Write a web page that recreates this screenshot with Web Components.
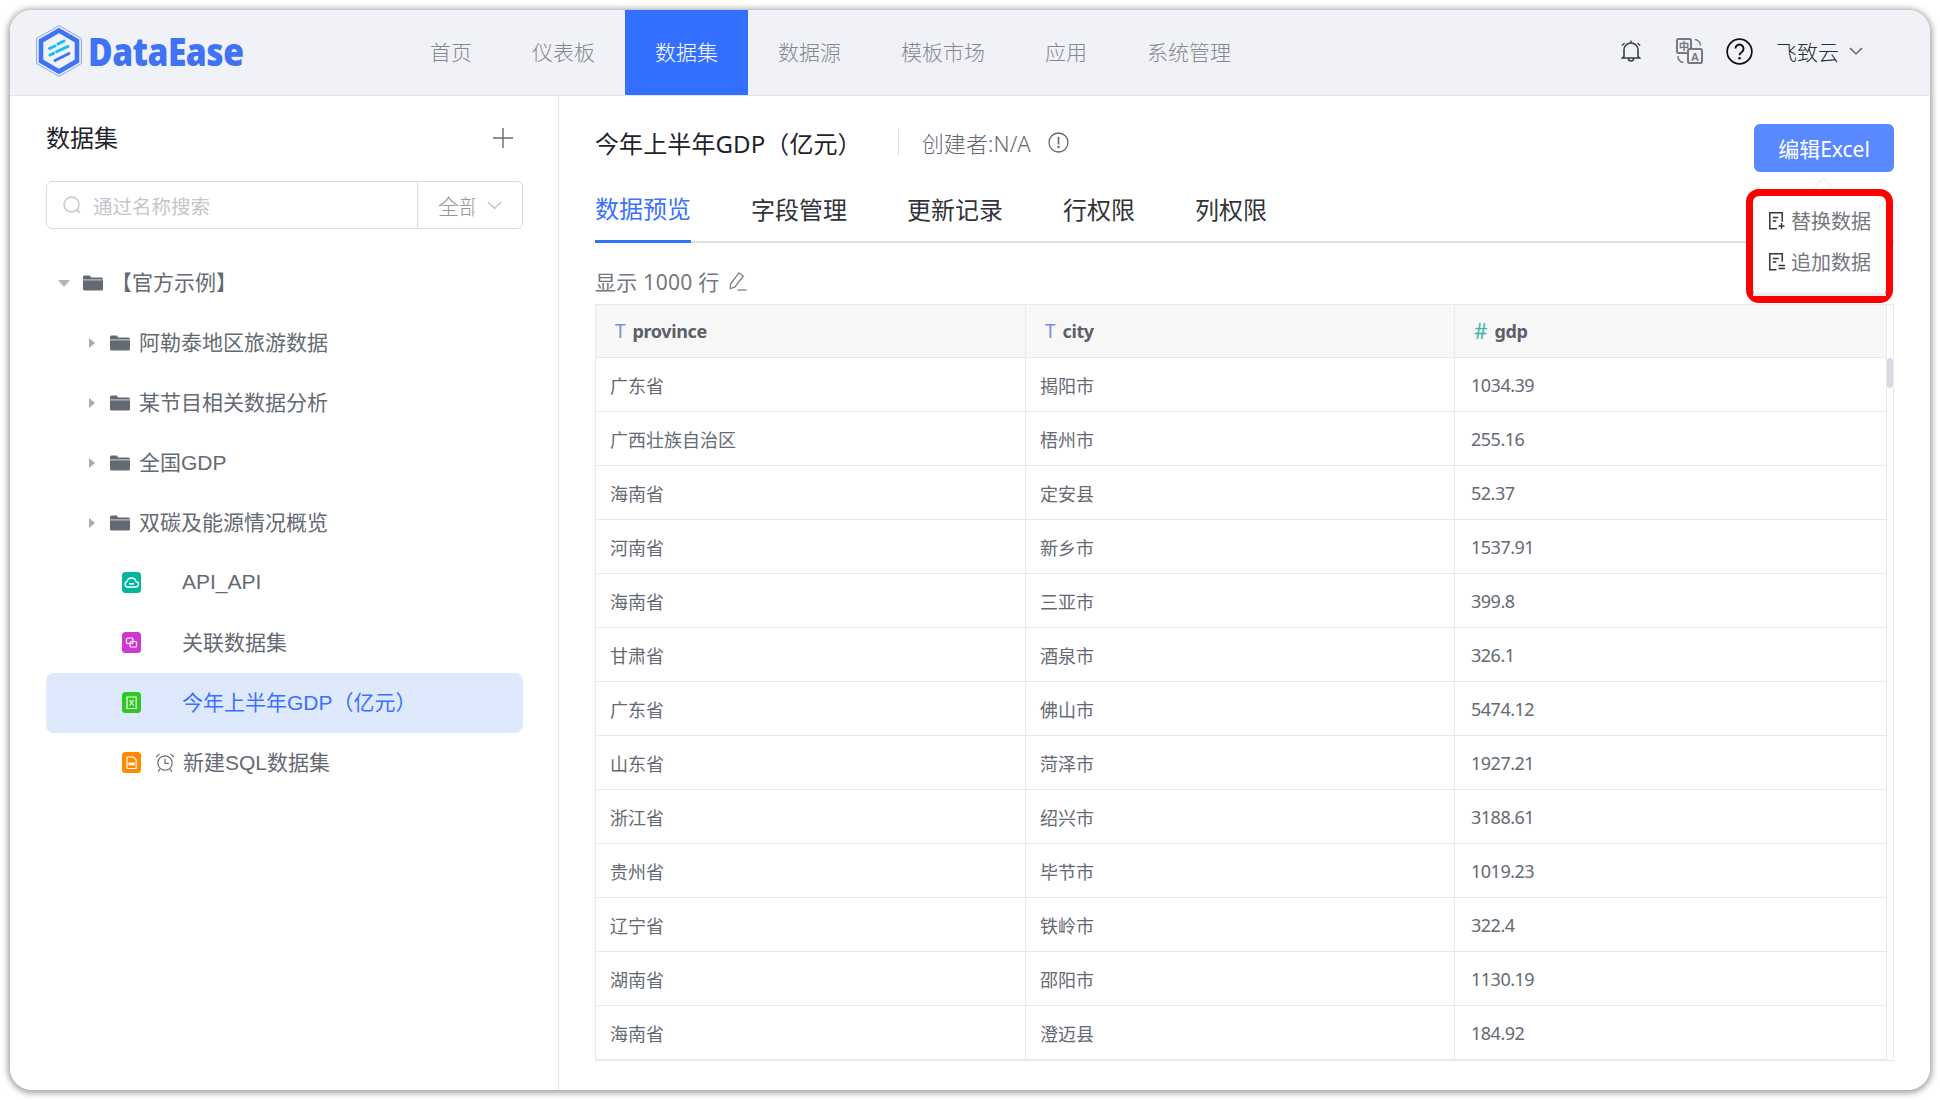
<!DOCTYPE html>
<html lang="zh">
<head>
<meta charset="UTF-8">
<title>DataEase</title>
<style>
  html, body { margin: 0; padding: 0; background: #fff; }
  body { width: 1940px; height: 1100px; overflow: hidden; font-family: "Noto Sans", "Noto Sans CJK SC", sans-serif; }
</style>
</head>
<body>
<de-app>
  <de-header slot="header"></de-header>
  <de-sidebar slot="side"></de-sidebar>
  <de-main slot="main"></de-main>
</de-app>
<script>
const CJK = '"Noto Sans CJK SC", sans-serif'
const icons = {
  folder: '<svg width="20" height="16" viewBox="0 0 20 16"><path d="M0 2a1.5 1.5 0 0 1 1.5-1.5h5.2l1.6 2h10.2A1.5 1.5 0 0 1 20 4v10a1.5 1.5 0 0 1-1.5 1.5h-17A1.5 1.5 0 0 1 0 14z" fill="#646a73"/><rect x="0" y="4.4" width="20" height="1" fill="#fff" opacity=".7"/></svg>',
  api: '<svg width="19" height="21" viewBox="0 0 19 21"><rect width="19" height="21" rx="3.5" fill="#04b49c"/><path d="M5.6 15a2.7 2.7 0 0 1-.6-5.3 4.6 4.6 0 0 1 9-.1 2.7 2.7 0 0 1-.5 5.4z" fill="none" stroke="#fff" stroke-width="1.3"/><rect x="7" y="11" width="5" height="1.6" fill="#fff"/></svg>',
  union: '<svg width="19" height="21" viewBox="0 0 19 21"><rect width="19" height="21" rx="3.5" fill="#d036d0"/><rect x="4.5" y="6" width="6.5" height="5.5" rx="1" fill="none" stroke="#fff" stroke-width="1.2"/><rect x="8" y="9.5" width="6.5" height="5.5" rx="1" fill="none" stroke="#fff" stroke-width="1.2"/></svg>',
  excel: '<svg width="19" height="21" viewBox="0 0 19 21"><rect width="19" height="21" rx="3.5" fill="#2cc91e"/><path d="M5 5h9.2v11.5H5z" fill="none" stroke="#fff" stroke-width="1.2"/><path d="M7.6 8l4 5.5M11.6 8l-4 5.5" stroke="#fff" stroke-width="1.1"/></svg>',
  sql: '<svg width="19" height="21" viewBox="0 0 19 21"><rect width="19" height="21" rx="3.5" fill="#ff8a00"/><path d="M5 5h6.5L14.2 8v8.5H5z" fill="none" stroke="#fff" stroke-width="1.2"/><rect x="6.5" y="10.5" width="6.2" height="2.8" fill="#fff"/></svg>',
  clock: '<svg width="20" height="21" viewBox="0 0 20 21" fill="none" stroke="#646a73" stroke-width="1.2"><circle cx="10" cy="11" r="7.2"/><path d="M10 6.8V11.4h3.8"/><path d="M1 5.2 4.4 1.8M19 5.2 15.6 1.8M4.8 17.2l-1.6 2.4M15.2 17.2l1.6 2.4"/></svg>'
}

class DeApp extends HTMLElement {
  constructor() {
    super()
    this.attachShadow({mode: 'open'}).innerHTML = `
      <style>
        :host { display: block; padding: 10px; }
        .win { width: 1920px; height: 1080px; box-sizing: border-box; border-radius: 22px; overflow: hidden; background: #fff;
               display: flex; flex-direction: column; }
        .frame { width: 1920px; height: 1080px; border-radius: 22px; box-shadow: 0 1px 6px 2px rgba(0,0,0,.38); }
        .body { flex: 1; display: flex; min-height: 0; }
      </style>
      <div class="frame"><div class="win">
        <slot name="header"></slot>
        <div class="body"><slot name="side"></slot><slot name="main"></slot></div>
      </div></div>`
  }
}

class DeHeader extends HTMLElement {
  constructor() {
    super()
    const items = ['首页', '仪表板', '数据集', '数据源', '模板市场', '应用', '系统管理']
    this.attachShadow({mode: 'open'}).innerHTML = `
      <style>
        :host { display: flex; height: 86px; box-sizing: border-box; background: #f0f2f7; border-bottom: 1px solid #e3e5ea;
                font-family: "Noto Sans CJK SC", sans-serif; align-items: stretch; padding-left: 26px; }
        .logo { display: flex; align-items: center; width: 364px; gap: 6px; padding-bottom: 3px; box-sizing: border-box; }
        .logo span { font: 800 38px/1 "Open Sans", sans-serif; color: #3f72f6; letter-spacing: -.6px; transform: scaleX(.885); transform-origin: left center; }
        nav { display: flex; }
        a { padding: 0 30px 4px; display: flex; align-items: center; font-size: 21px; color: #85888e; font-weight: 300; }
        a.on { background: #3370ff; color: #fff; }
        .right { margin-left: auto; display: flex; align-items: center; padding: 0 67px 3px 0; color: #1f2329; font-size: 21px; }
        .right svg { display: block; flex: none; }
        .user { font-weight: 300; color: #2a2e35; margin-left: 23px; }
      </style>
      <div class="logo">
        <svg width="46" height="52" viewBox="0 0 46 52">
          <path d="M23 .6 45.400 13.500v25L23 51.400 .6 38.500v-25z" fill="none" stroke="#86a5f8" stroke-width="1"/>
          <path d="M23 5.500 41 15.900v20.200L23 46.500 5 36.100V15.900z" fill="#f0f2f7" stroke="#3f72f6" stroke-width="4.600"/>
          <path d="M13.500 23.500 19 21M22 19 28 16M14 30 17.500 28.300M20.700 26.700 32 21.500" stroke="#17bdf8" stroke-width="3" stroke-linecap="round" fill="none"/>
          <path d="M19 35.500 33 28.500" stroke="#3f72f6" stroke-width="2.800" stroke-linecap="round" fill="none"/>
        </svg>
        <span>DataEase</span>
      </div>
      <nav>${items.map(t => `<a class="${t === '数据集' ? 'on' : ''}">${t}</a>`).join('')}</nav>
      <div class="right">
        <svg width="20" height="22" viewBox="0 0 20 22" fill="none" stroke="#3a3d42" stroke-width="1.600"><path d="M3 16.500V10a7 7 0 0 1 14 0v6.500l1.500 1.500h-17zM7.500 18.500a2.500 2.500 0 0 0 5 0"/><path d="M10 .5V3M.8 5.500l2.800-2.300M19.200 5.500l-2.800-2.300" stroke-width="1.300"/></svg>
        <svg style="margin-left:35px" width="27" height="26" viewBox="0 0 27 26" fill="none" stroke="#76797e" stroke-width="2"><rect x="1" y="1" width="14" height="14" rx="1.500"/><rect x="12" y="11" width="14" height="14" rx="1.500" fill="#f0f2f7"/><text x="8" y="12" text-anchor="middle" font-family="Noto Sans CJK SC" font-size="10.500" font-weight="700" fill="#76797e" stroke="none">中</text><text x="19" y="22.500" text-anchor="middle" font-family="Liberation Sans" font-size="11" font-weight="700" fill="#76797e" stroke="none">A</text><path d="M19 1.500a6 6 0 0 1 5.500 6M2 18a6 6 0 0 0 5.500 6.500" stroke-width="1.500"/></svg>
        <svg style="margin-left:23px" width="27" height="27" viewBox="0 0 28 28" fill="none"><circle cx="14" cy="14" r="12.800" stroke="#111" stroke-width="1.800"/><path d="M9.800 11a4.200 4.200 0 1 1 6.600 3.500c-1.500 1-2.400 1.800-2.400 3.300" stroke="#111" stroke-width="2"/><circle cx="14" cy="21" r="1.400" fill="#111"/></svg>
        <span class="user">飞致云</span>
        <svg style="margin-left:10px" width="14" height="8" viewBox="0 0 14 8" fill="none" stroke="#4a4d52" stroke-width="1.200"><path d="M1 1l6 6 6-6"/></svg>
      </div>`
  }
}

class DeTreeRow extends HTMLElement {
  constructor() {
    super()
    const kind = this.getAttribute('kind') || 'folder'
    const level = this.getAttribute('level') || '1'
    const open = this.hasAttribute('open')
    const active = this.hasAttribute('active')
    const icon = this.getAttribute('icon')
    let lead = ''
    if (kind === 'folder') {
      lead = `<i class="caret ${open ? 'down' : ''}" style="margin-left:${level === '0' ? 12 : 43}px"></i><span class="ic" style="margin-left:${level === '0' ? 13 : 15}px">${icons.folder}</span>`
    } else {
      lead = `<span class="ic" style="margin-left:76px;margin-bottom:2px">${icons[icon]}</span>`
      lead += this.hasAttribute('timed')
        ? `<span class="ic" style="margin-left:14px;margin-right:8px;margin-bottom:2px">${icons.clock}</span>`
        : `<span style="width:41px"></span>`
    }
    this.attachShadow({mode: 'open'}).innerHTML = `
      <style>
        :host { display: block; }
        .row { height: 60px; display: flex; align-items: center; border-radius: 8px; color: #646a73;
               font: 21px "Liberation Sans", ${CJK}; box-sizing: border-box; }
        .row.active { background: #dfe9fe; color: #3a70ff; }
        .ic { display: flex; flex: none; }
        .caret { width: 0; height: 0; flex: none; }
        .caret:not(.down) { border-left: 6px solid #a9acb1; border-top: 5px solid transparent; border-bottom: 5px solid transparent; }
        .caret.down { border-top: 7px solid #b3b5ba; border-left: 6px solid transparent; border-right: 6px solid transparent; }
        .t { margin-left: ${kind === 'folder' ? (level === '0' ? 8 : 9) : 0}px; margin-bottom: ${this.hasAttribute('latin') ? 2 : 4}px; white-space: nowrap; }
      </style>
      <div class="row ${active ? 'active' : ''}">${lead}<span class="t"><slot></slot></span></div>`
  }
}

class DeSidebar extends HTMLElement {
  constructor() {
    super()
    this.attachShadow({mode: 'open'}).innerHTML = `
      <style>
        :host { display: block; width: 549px; height: 100%; box-sizing: border-box; border-right: 1px solid #e6e7ea; padding: 0 35px 0 36px; font-family: ${CJK}; }
        .head { display: flex; align-items: center; justify-content: space-between; height: 80px; font-size: 24px; color: #1f2329; }
        .head svg { margin: 4px 10px 0 0; }
        .search { display: flex; height: 48px; margin-top: 5px; box-sizing: border-box; border: 1px solid #d8dade; border-radius: 6px; }
        .inp { width: 371px; box-sizing: border-box; border-right: 1px solid #d8dade; display: flex; align-items: center; padding-left: 16px; gap: 12px; color: #c3c6cb; font-size: 19.500px; }
        .sel { flex: 1; display: flex; align-items: center; padding-left: 20px; color: #95989e; font-size: 21px; gap: 12px; }
        .sel b { font-weight: 300; width: 37px; overflow: hidden; white-space: nowrap; }
        .tree { margin-top: 24px; }
      </style>
      <div class="head"><span>数据集</span>
        <svg width="20" height="20" viewBox="0 0 20 20" stroke="#646a73" stroke-width="1.400"><path d="M10 0v20M0 10h20"/></svg>
      </div>
      <div class="search">
        <div class="inp"><svg width="18" height="18" viewBox="0 0 18 18" fill="none" stroke="#c3c6cb" stroke-width="1.400"><circle cx="8.500" cy="8.500" r="7.500"/><path d="M14 14l3 3"/></svg><span>通过名称搜索</span></div>
        <div class="sel"><b>全部</b><svg width="15" height="9" viewBox="0 0 15 9" fill="none" stroke="#bfc2c7" stroke-width="1.300"><path d="M1 1l6.500 6.500L14 1"/></svg></div>
      </div>
      <div class="tree">
        <de-tree-row level="0" open>【官方示例】</de-tree-row>
        <de-tree-row level="1">阿勒泰地区旅游数据</de-tree-row>
        <de-tree-row level="1">某节目相关数据分析</de-tree-row>
        <de-tree-row level="1">全国GDP</de-tree-row>
        <de-tree-row level="1">双碳及能源情况概览</de-tree-row>
        <de-tree-row kind="leaf" icon="api" latin>API_API</de-tree-row>
        <de-tree-row kind="leaf" icon="union">关联数据集</de-tree-row>
        <de-tree-row kind="leaf" icon="excel" active>今年上半年GDP（亿元）</de-tree-row>
        <de-tree-row kind="leaf" icon="sql" timed>新建SQL数据集</de-tree-row>
      </div>`
  }
}

class DeTable extends HTMLElement {
  constructor() {
    super()
    const rows = [
      ['广东省','揭阳市','1034.39'],['广西壮族自治区','梧州市','255.16'],['海南省','定安县','52.37'],
      ['河南省','新乡市','1537.91'],['海南省','三亚市','399.8'],['甘肃省','酒泉市','326.1'],
      ['广东省','佛山市','5474.12'],['山东省','菏泽市','1927.21'],['浙江省','绍兴市','3188.61'],
      ['贵州省','毕节市','1019.23'],['辽宁省','铁岭市','322.4'],['湖南省','邵阳市','1130.19'],['海南省','澄迈县','184.92']
    ]
    const cols = [['T','province'],['T','city'],['#','gdp']]
    this.attachShadow({mode: 'open'}).innerHTML = `
      <style>
        :host { display: block; width: 1299px; height: 757px; box-sizing: border-box; border: 1px solid #e8e9eb; position: relative; overflow: hidden; font-family: "Noto Sans", ${CJK}; }
        .grid { display: grid; grid-template-columns: 430px 429px 432px; width: 1291px; grid-template-rows: 53px; grid-auto-rows: 54px; }
        .h, .c { box-sizing: border-box; border-right: 1px solid #e8e9eb; border-bottom: 1px solid #e8e9eb; display: flex; align-items: center; white-space: nowrap; }
        .h { background: #f7f7f7; padding-left: 19px; font-size: 18px; font-weight: 700; color: #5c6068; gap: 7px; }
        .h span { letter-spacing: -.4px; }
        .h i { font-style: normal; font-weight: 400; color: #6f93d8; font-size: 19px; }
        .h i.n { color: #3fb6aa; font-size: 21px; }
        .c { padding-left: 14px; font-size: 18px; color: #646a73; font-weight: 400; }
        .c.num { letter-spacing: -.5px; padding-left: 16px; }
        .thumb { position: absolute; right: 0; top: 53px; width: 6px; height: 30px; background: #d8dbe5; border-radius: 3px; }
      </style>
      <div class="grid">
        ${cols.map(c => `<div class="h"><i class="${c[0] === '#' ? 'n' : ''}">${c[0]}</i><span>${c[1]}</span></div>`).join('')}
        ${rows.map(r => r.map((v, i) => `<div class="c ${i === 2 ? 'num' : ''}">${v}</div>`).join('')).join('')}
      </div>
      <div class="thumb"></div>`
  }
}

class DePopover extends HTMLElement {
  constructor() {
    super()
    this.attachShadow({mode: 'open'}).innerHTML = `
      <style>
        :host { display: block; position: absolute; left: 1187px; top: 93px; width: 147px; height: 114px; font-family: ${CJK}; z-index: 2; }
        .box { position: relative; box-sizing: border-box; width: 100%; height: 100%; background: #fff; border: 7px solid #fe0000; border-radius: 13px; padding-top: 4px; }
        .arrow { position: absolute; left: 71px; top: -7px; width: 12px; height: 12px; background: #fff; transform: rotate(45deg); box-shadow: -1px -1px 2px rgba(0,0,0,.08); }
        .it { display: flex; align-items: center; height: 41px; font-size: 20px; color: #74777d; padding-left: 16px; gap: 6px; }
        .it svg { flex: none; }
        .shade { position: absolute; left: 0; right: 0; bottom: 0; height: 3px; background: #eceef3; }
      </style>
      <i class="arrow"></i>
      <div class="box">
        <div class="it"><svg width="16" height="18" viewBox="0 0 16 18" fill="none" stroke="#33373d" stroke-width="1.500"><path d="M8 16.800H.8V.8h12.400v9M3.800 5.500h5.500M3.800 9h3.500"/><path d="M9.500 14h6M12.500 11v6"/></svg><span>替换数据</span></div>
        <div class="it"><svg width="16" height="18" viewBox="0 0 16 18" fill="none" stroke="#33373d" stroke-width="1.500"><path d="M7.500 16.800H.8V.8h12.400v8M3.800 5.500h6M3.800 9h3.500"/><path d="M9.500 12.500H16M9.500 15.500H16"/></svg><span>追加数据</span></div>
        <div class="shade"></div>
      </div>`
  }
}

class DeMain extends HTMLElement {
  constructor() {
    super()
    const tabs = ['数据预览', '字段管理', '更新记录', '行权限', '列权限']
    this.attachShadow({mode: 'open'}).innerHTML = `
      <style>
        :host { display: block; flex: 1; width: 1371px; height: 994px; box-sizing: border-box; padding: 0 36px; position: relative; font-family: ${CJK}; }
        .top { display: flex; align-items: center; height: 88px; padding-top: 2px; }
        .title { font-size: 24px; color: #1f2329; font-family: "Noto Sans", ${CJK}; white-space: nowrap; letter-spacing: .1px; }
        .sep { width: 1px; height: 27px; background: #dcdfe3; margin: 0 23px 0 36px; }
        .who { font-size: 22px; color: #646a73; font-family: "Noto Sans", ${CJK}; font-weight: 300; letter-spacing: .1px; }
        .info { margin-left: 17px; display: flex; }
        button { margin: 12px 0 0 auto; width: 140px; height: 48px; background: #5a88fe; color: #fff; border: 0; border-radius: 6px; font: 21px "Noto Sans", ${CJK}; padding: 0; }
        .tabs { display: flex; gap: 60px; height: 69px; box-sizing: border-box; border-bottom: 2px solid #dedfe1; margin-top: -12px; font-size: 24px; color: #30343a; }
        .tabs span { display: flex; align-items: center; height: 69px; box-sizing: border-box; font-weight: 400; }
        .tabs .on { color: #3b71ff; border-bottom: 3px solid #3370ff; }
        .count { display: flex; align-items: center; height: 61px; box-sizing: border-box; padding-top: 14px; font-size: 21px; letter-spacing: .3px; color: #74777d; font-family: "Noto Sans", ${CJK}; gap: 9px; }
      </style>
      <div class="top">
        <span class="title">今年上半年GDP（亿元）</span><i class="sep"></i>
        <span class="who">创建者:N/A</span>
        <span class="info"><svg width="21" height="21" viewBox="0 0 21 21" fill="none" stroke="#646a73" stroke-width="1.300"><circle cx="10.500" cy="10.500" r="9.500"/><path d="M10.500 5v7.500" stroke-width="1.600"/><circle cx="10.500" cy="15" r=".6" stroke-width="1.200"/></svg></span>
        <button>编辑Excel</button>
      </div>
      <div class="tabs">${tabs.map((t, i) => `<span class="${i ? '' : 'on'}">${t}</span>`).join('')}</div>
      <div class="count"><span>显示 1000 行</span><svg width="18" height="20" viewBox="0 0 18 20" fill="none" stroke="#7b7e83" stroke-width="1.300"><path d="M1.500 13 10 1.800l4.200 3.200-8.500 11.200-4.500 1.300z"/><path d="M8.500 19h9"/></svg></div>
      <de-table></de-table>
      <de-popover></de-popover>`
  }
}

customElements.define('de-tree-row', DeTreeRow)
customElements.define('de-table', DeTable)
customElements.define('de-popover', DePopover)
customElements.define('de-header', DeHeader)
customElements.define('de-sidebar', DeSidebar)
customElements.define('de-main', DeMain)
customElements.define('de-app', DeApp)
</script>
</body>
</html>
